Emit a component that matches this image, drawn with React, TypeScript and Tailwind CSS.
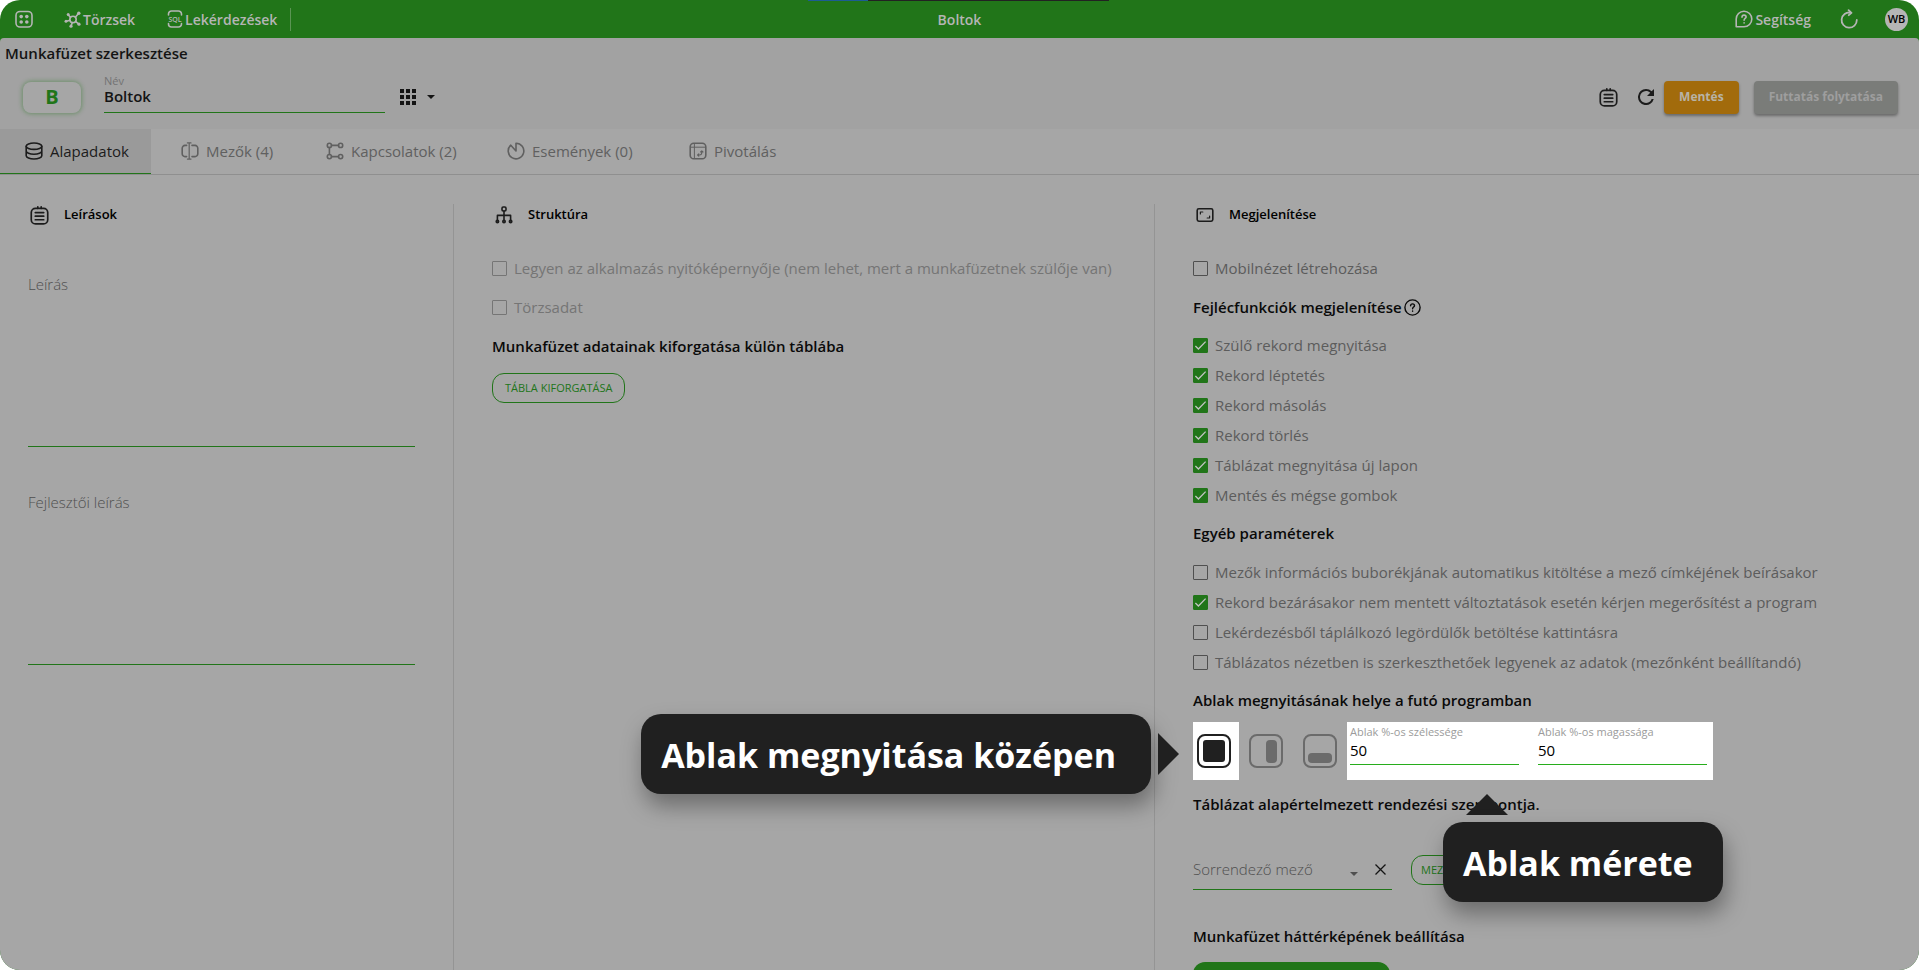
import type { ReactNode } from "react";

const headerFunctions = [
  "Szülő rekord megnyitása",
  "Rekord léptetés",
  "Rekord másolás",
  "Rekord törlés",
  "Táblázat megnyitása új lapon",
  "Mentés és mégse gombok",
];

const otherParams = [
  { label: "Mezők információs buborékjának automatikus kitöltése a mező címkéjének beírásakor", checked: false },
  { label: "Rekord bezárásakor nem mentett változtatások esetén kérjen megerősítést a program", checked: true },
  { label: "Lekérdezésből táplálkozó legördülők betöltése kattintásra", checked: false },
  { label: "Táblázatos nézetben is szerkeszthetőek legyenek az adatok (mezőnként beállítandó)", checked: false },
];

const Svg = ({ size = 18, className = "", children }: { size?: number; className?: string; children: ReactNode }) => (
  <svg
    width={size}
    height={size}
    viewBox="0 0 18 18"
    fill="none"
    stroke="currentColor"
    strokeWidth="1.6"
    strokeLinecap="round"
    strokeLinejoin="round"
    className={`shrink-0 ${className}`}
    aria-hidden="true"
  >
    {children}
  </svg>
);

const AppsIcon = () => (
  <Svg>
    <rect x="1" y="1.5" width="16" height="15.5" rx="4" />
    <g fill="currentColor" stroke="none">
      <circle cx="6.2" cy="6.6" r="1.8" />
      <circle cx="11.8" cy="6.6" r="1.8" />
      <circle cx="6.2" cy="12" r="1.8" />
      <circle cx="11.8" cy="12" r="1.8" />
    </g>
  </Svg>
);

const HubIcon = () => (
  <Svg>
    <circle cx="9" cy="9.5" r="3.2" />
    <path d="M11.3 7.2 14.3 3.8M6.6 7.4 4.6 5.2M6 10.3 2.4 11.2M8.3 12.6 7.2 15.8M11.6 11.4l2.6 2.2" />
    <g fill="currentColor" stroke="none">
      <circle cx="14.8" cy="3.2" r="1.7" />
      <circle cx="4.2" cy="4.4" r="1.5" />
      <circle cx="2" cy="11.2" r="1.5" />
      <circle cx="7" cy="16.2" r="1.6" />
      <circle cx="15" cy="14.2" r="1.6" />
    </g>
  </Svg>
);

const SqlIcon = () => (
  <Svg>
    <path d="M2.5 5V4a3 3 0 0 1 3-3h7a3 3 0 0 1 3 3v1M2.5 13.5v.5a3 3 0 0 0 3 3h7a3 3 0 0 0 3-3v-.5" />
    <text x="9" y="11.8" textAnchor="middle" fontSize="7" fontFamily="Open Sans, sans-serif" fontWeight="600" fill="currentColor" stroke="none">
      SQL
    </text>
  </Svg>
);

const HelpBubbleIcon = () => (
  <Svg>
    <path d="M1.2 16.8V9a7.8 7.8 0 1 1 7.8 7.8z" />
    <path d="M7 7.2c0-1.3.9-2.1 2-2.1s2.1.8 2.1 1.9c0 1.4-2 1.6-2 3.2M9.1 12.7v.2" />
  </Svg>
);

const ReloadIcon = () => (
  <svg width="20" height="20" viewBox="0 0 20 20" fill="none" stroke="currentColor" strokeWidth="1.8" strokeLinecap="round" strokeLinejoin="round" aria-hidden="true">
    <path d="M11.5 3.6A7.6 7.6 0 1 0 17.8 11" />
    <path d="m9.6 1.2 2.9 2.6-2.7 2.4" />
  </svg>
);

const NoteIcon = ({ size = 19 }: { size?: number }) => (
  <Svg size={size}>
    <rect x="1.2" y="2.2" width="15.6" height="14.8" rx="4" />
    <path d="M7.4.8v1.4M10.6.8v1.4M5 6.2h8M5 9.6h8M5 13h8" />
  </Svg>
);

const DatabaseIcon = () => (
  <Svg>
    <ellipse cx="9" cy="4.2" rx="7.8" ry="3.2" />
    <path d="M1.2 4.2v9.6c0 1.8 3.5 3.2 7.8 3.2s7.8-1.4 7.8-3.2V4.2M1.2 9c0 1.8 3.5 3.2 7.8 3.2s7.8-1.4 7.8-3.2" />
  </Svg>
);

const FieldsIcon = () => (
  <Svg>
    <path d="M5.6 3.4H4A2.8 2.8 0 0 0 1.2 6.2v5.6A2.8 2.8 0 0 0 4 14.6h1.6M11 3.4h3a2.8 2.8 0 0 1 2.8 2.8v5.6a2.8 2.8 0 0 1-2.8 2.8h-3" />
    <path strokeWidth="1.2" d="M8.2 1.2v15.6M6.4.9h3.6M6.4 17.1h3.6" />
  </Svg>
);

const LinksIcon = () => (
  <Svg>
    <circle cx="3.4" cy="3.4" r="2.1" />
    <circle cx="14.6" cy="3.4" r="2.1" />
    <circle cx="3.4" cy="14.6" r="2.1" />
    <circle cx="14.6" cy="14.6" r="2.1" />
    <path d="M5.5 3.4h7M5.5 14.6h7M3.4 5.5v7" />
  </Svg>
);

const EventsIcon = () => (
  <Svg>
    <path d="M9 9V1.2A7.8 7.8 0 1 1 3.8 3.2z" />
  </Svg>
);

const PivotIcon = () => (
  <Svg>
    <rect x="1.2" y="1.2" width="15.6" height="15.6" rx="3.6" />
    <path strokeWidth="1" d="M1.4 5.2h15.2M5.4 1.4v15.2" />
    <path strokeWidth="1.1" d="M8.6 13h1.8a2.4 2.4 0 0 0 2.4-2.4V9M9.8 11.8 8.6 13l1.2 1.2M11.6 10l1.2-1.2L14 10" />
  </Svg>
);

const TreeIcon = () => (
  <Svg>
    <rect x="7" y="1" width="4" height="4" rx="1.2" />
    <path d="M9 5v10M2.4 15V9.4h13.2V15" />
    <circle cx="2.4" cy="15.6" r="1.2" />
    <circle cx="9" cy="15.6" r="1.2" />
    <circle cx="15.6" cy="15.6" r="1.2" />
  </Svg>
);

const ScreenIcon = () => (
  <Svg>
    <rect x="1.2" y="2.8" width="15.6" height="12.4" rx="1.6" />
    <path strokeWidth="1.2" d="M4.4 8V6h2.4M13.6 10v2h-2.4" />
  </Svg>
);

const Caret = ({ className = "" }: { className?: string }) => (
  <svg width="8" height="4" viewBox="0 0 8 4" className={className} aria-hidden="true">
    <path d="M0 0h8L4 4z" fill="currentColor" />
  </svg>
);

const Check = ({ label, checked = false, disabled = false }: { label: string; checked?: boolean; disabled?: boolean }) => (
  <label className={`flex h-[30px] items-center gap-[7px] ${disabled ? "text-[#757575]" : "text-[#5c5c5c]"}`}>
    <span className="grid shrink-0 place-items-center">
      <input
        type="checkbox"
        defaultChecked={checked}
        disabled={disabled}
        className="peer col-start-1 row-start-1 size-[15px] appearance-none rounded-[1px] border border-[#4f4f4f] checked:border-[#217519] checked:bg-[#217519] disabled:border-[#757575]"
      />
      <svg
        width="15"
        height="15"
        viewBox="0 0 15 15"
        fill="none"
        stroke="#c4c4c4"
        strokeWidth="1.3"
        className="pointer-events-none invisible col-start-1 row-start-1 peer-checked:visible"
        aria-hidden="true"
      >
        <path d="m2.4 8 3 3 7.2-7.4" />
      </svg>
    </span>
    <span className="whitespace-nowrap">{label}</span>
  </label>
);

const ColumnTitle = ({ icon, children }: { icon: ReactNode; children: ReactNode }) => (
  <div className="flex h-[22px] items-center gap-[13px] text-black">
    <span className="flex w-[23px] justify-center text-[#1c1c1c]">{icon}</span>
    <h2 className="text-[13px] font-semibold">{children}</h2>
  </div>
);

const Heading = ({ className = "", children }: { className?: string; children: ReactNode }) => (
  <h3 className={`flex h-6 items-center font-semibold whitespace-nowrap text-[#0a0a0a] ${className}`}>{children}</h3>
);

const Tab = ({ icon, label, className, active = false }: { icon: ReactNode; label: string; className: string; active?: boolean }) => (
  <button
    type="button"
    role="tab"
    aria-selected={active}
    className={`flex items-center gap-[7px] border-b pl-[25px] whitespace-nowrap ${
      active ? "border-[#217519] bg-[#9a9a9a] text-[#1c1c1c]" : "border-transparent text-[#606060]"
    } ${className}`}
  >
    {icon}
    {label}
  </button>
);

const NoteField = ({ id, label, className }: { id: string; label: string; className: string }) => (
  <div className={className}>
    <label htmlFor={id} className="block h-6 font-light leading-6 text-[#4f4f4f]">
      {label}
    </label>
    <textarea id={id} className="block h-[151px] w-full resize-none border-b border-[#217519] outline-none" />
  </div>
);

const SizeField = ({ id, label }: { id: string; label: string }) => (
  <div className="w-[169px]">
    <label htmlFor={id} className="block text-[11px] leading-4 text-[#9b9b9b]">
      {label}
    </label>
    <input id={id} defaultValue="50" className="block h-[25px] w-full border-b border-[#27ad1c] pb-1 text-black outline-none" />
  </div>
);

const Callout = ({ className, children }: { className: string; children: ReactNode }) => (
  <div
    className={`absolute flex h-20 items-center rounded-[20px] bg-[#202020] pt-[2px] pl-5 text-[34px] font-bold whitespace-nowrap text-white shadow-[3px_12px_22px_rgba(0,0,0,0.35)] ${className}`}
  >
    {children}
  </div>
);

const TopBar = () => (
  <header className="relative grid h-[38px] shrink-0 grid-cols-[1fr_auto_1fr] items-center text-[14px] font-semibold text-[#b5b5b5]">
    <div className="absolute top-0 left-[42.1%] flex h-px w-[301px]">
      <span className="w-[60px] bg-[#1d5c94]" />
      <span className="flex-1 bg-[#222]" />
    </div>
    <nav className="flex items-center pl-[15px]">
      <button type="button" aria-label="Alkalmazások" className="mr-[31px]">
        <AppsIcon />
      </button>
      <a href="#torzsek" className="mr-[31px] flex items-center gap-px">
        <HubIcon />
        Törzsek
      </a>
      <a href="#lekerdezesek" className="flex items-center gap-px">
        <SqlIcon />
        Lekérdezések
      </a>
      <span className="ml-[13px] h-[23px] w-px bg-[#5a9553]" />
    </nav>
    <h1>Boltok</h1>
    <div className="flex items-center justify-end pr-[11px]">
      <a href="#segitseg" className="mr-7 flex items-center gap-[2px]">
        <HelpBubbleIcon />
        Segítség
      </a>
      <button type="button" aria-label="Újratöltés" className="mr-[26px]">
        <ReloadIcon />
      </button>
      <button type="button" className="size-[23px] rounded-full bg-[#b5b5b5] text-[11px] text-black">
        WB
      </button>
    </div>
  </header>
);

const TitleBar = () => (
  <div className="h-[91px] shrink-0 rounded-t-[4px] bg-[#a2a2a2] pt-[5px]">
    <h2 className="pl-[5px] leading-5 font-semibold text-[#141414]">Munkafüzet szerkesztése</h2>
    <div className="mt-[10px] flex h-12 items-center pr-[21px] pl-[23px]">
      <div className="flex h-[31px] w-[58px] items-center justify-center rounded-[8px] bg-[#a6a6a6] text-[20px] font-bold text-[#217519] shadow-[0_0_4px_1px_rgba(33,117,25,0.4)]">
        B
      </div>
      <div className="ml-[23px] w-[281px] pb-[9px]">
        <label htmlFor="name" className="block text-[11px] leading-4 text-[#737373]">
          Név
        </label>
        <input id="name" defaultValue="Boltok" className="block h-6 w-full border-b border-[#217519] pb-2 font-semibold text-[#141414] outline-none" />
      </div>
      <button type="button" aria-label="Ikon választása" className="ml-[15px] flex items-center gap-[11px] text-[#141414]">
        <svg width="16" height="16" viewBox="0 0 16 16" fill="currentColor" aria-hidden="true">
          {[0, 6, 12].map((y) => [0, 6, 12].map((x) => <rect key={`${x}-${y}`} x={x} y={y} width="4" height="4" />))}
        </svg>
        <Caret />
      </button>
      <div className="ml-auto flex items-center text-[#1c1c1c]">
        <button type="button" aria-label="Napló" className="mr-5">
          <NoteIcon />
        </button>
        <button type="button" aria-label="Frissítés" className="mr-[10px]">
          <svg width="16" height="16" viewBox="0 0 16 16" fill="currentColor" aria-hidden="true">
            <path d="M13.65 2.35A7.96 7.96 0 0 0 8 0a8 8 0 1 0 7.74 10h-2.08A6 6 0 1 1 8 2c1.66 0 3.14.69 4.22 1.78L9 7h7V0z" />
          </svg>
        </button>
        <button type="button" className="h-[33px] rounded-[4px] bg-[#a26b0c] px-[15px] text-[12px] font-bold text-[#b8b3a6] shadow-[0_2px_3px_rgba(0,0,0,0.35)]">
          Mentés
        </button>
        <button
          type="button"
          disabled
          className="ml-[15px] h-[33px] rounded-[4px] bg-[#7a7c79] px-[15px] text-[12px] font-bold text-[#9e9e9e] shadow-[0_2px_3px_rgba(0,0,0,0.35)]"
        >
          Futtatás folytatása
        </button>
      </div>
    </div>
  </div>
);

const outlineButton = "h-[30px] rounded-[12px] border border-[#217519] text-[11px] whitespace-nowrap text-[#217519]";

const WindowPlacement = () => (
  <div className="mt-[10px] flex h-[58px]">
    <div className="relative flex w-[46px] bg-white pl-1">
      <button type="button" aria-label="Középen" className="text-[#202020]">
        <svg width="34" height="34" viewBox="0 0 34 34" fill="none" aria-hidden="true">
          <rect x="1" y="1" width="32" height="32" rx="7" stroke="currentColor" strokeWidth="2" />
          <rect x="6" y="6" width="22" height="22" rx="3" fill="currentColor" />
        </svg>
      </button>
      <Callout className="right-[88px] bottom-[-14px] pr-[35px]">Ablak megnyitása középen</Callout>
      <svg width="21" height="42" viewBox="0 0 21 42" className="absolute top-[11px] right-[60px]" aria-hidden="true">
        <path d="M0 0v42l21-21z" fill="#202020" />
      </svg>
    </div>
    <button type="button" aria-label="Jobb oldalon" className="flex w-[54px] items-center justify-center text-[#6b6b6b]">
      <svg width="34" height="34" viewBox="0 0 34 34" fill="none" aria-hidden="true">
        <rect x="1" y="1" width="32" height="32" rx="7" stroke="currentColor" strokeWidth="2" />
        <rect x="17" y="6" width="11" height="23" rx="4" fill="currentColor" />
      </svg>
    </button>
    <button type="button" aria-label="Alul" className="flex w-[54px] items-center justify-center text-[#6b6b6b]">
      <svg width="34" height="34" viewBox="0 0 34 34" fill="none" aria-hidden="true">
        <rect x="1" y="1" width="32" height="32" rx="7" stroke="currentColor" strokeWidth="2" />
        <rect x="5" y="19" width="24" height="10" rx="4" fill="currentColor" />
      </svg>
    </button>
    <div className="relative flex gap-[19px] bg-white pt-[2px] pr-[6px] pl-[3px]">
      <SizeField id="win-width" label="Ablak %-os szélessége" />
      <SizeField id="win-height" label="Ablak %-os magassága" />
      <svg width="42" height="21" viewBox="0 0 42 21" className="absolute top-[72px] left-[119px] z-10" aria-hidden="true">
        <path d="M21 0 42 21H0z" fill="#202020" />
      </svg>
      <Callout className="top-[100px] left-24 z-10 pr-[30px]">Ablak mérete</Callout>
    </div>
  </div>
);

export default function App() {
  return (
    <div className="flex h-screen flex-col overflow-hidden rounded-[20px] bg-[#217519] font-['Open_Sans',sans-serif] text-[15px]">
      <TopBar />
      <TitleBar />
      <div role="tablist" className="flex h-[46px] shrink-0 border-b border-[#8f8f8f] bg-[#a6a6a6]">
        <Tab icon={<DatabaseIcon />} label="Alapadatok" active className="w-[151px]" />
        <Tab icon={<FieldsIcon />} label="Mezők (4)" className="ml-[5px] w-[145px]" />
        <Tab icon={<LinksIcon />} label="Kapcsolatok (2)" className="w-[181px]" />
        <Tab icon={<EventsIcon />} label="Események (0)" className="w-[182px]" />
        <Tab icon={<PivotIcon />} label="Pivotálás" className="w-[145px]" />
      </div>
      <main className="grid min-h-0 flex-1 grid-cols-[454fr_701fr_764fr] bg-[#a6a6a6] pt-[29px]">
        <section className="border-r border-[#949494] pr-[38px] pl-7">
          <ColumnTitle icon={<NoteIcon />}>Leírások</ColumnTitle>
          <NoteField id="description" label="Leírás" className="mt-[46px]" />
          <NoteField id="dev-description" label="Fejlesztői leírás" className="mt-[43px]" />
        </section>

        <section className="border-r border-[#949494] pl-[38px]">
          <ColumnTitle icon={<TreeIcon />}>Struktúra</ColumnTitle>
          <div className="mt-[27px] flex flex-col gap-[9px]">
            <Check label="Legyen az alkalmazás nyitóképernyője (nem lehet, mert a munkafüzetnek szülője van)" disabled />
            <Check label="Törzsadat" disabled />
          </div>
          <Heading className="mt-3">Munkafüzet adatainak kiforgatása külön táblába</Heading>
          <button type="button" className={`mt-[15px] px-3 ${outlineButton}`}>
            TÁBLA KIFORGATÁSA
          </button>
        </section>

        <section className="min-w-0 pl-[38px]">
          <ColumnTitle icon={<ScreenIcon />}>Megjelenítése</ColumnTitle>
          <div className="mt-[27px]">
            <Check label="Mobilnézet létrehozása" />
          </div>
          <Heading className="mt-3">
            Fejlécfunkciók megjelenítése
            <svg width="17" height="17" viewBox="0 0 17 17" fill="none" stroke="currentColor" strokeWidth="1.4" strokeLinecap="round" className="ml-[2px]" aria-hidden="true">
              <circle cx="8.5" cy="8.5" r="7.6" />
              <path d="M6.6 6.8c0-1.1.8-1.9 1.9-1.9s2 .7 2 1.8c0 1.3-1.9 1.5-1.9 3M8.6 12v.2" />
            </svg>
          </Heading>
          <div className="mt-[11px]">
            {headerFunctions.map((label) => (
              <Check key={label} label={label} checked />
            ))}
          </div>
          <Heading className="mt-[11px]">Egyéb paraméterek</Heading>
          <div className="mt-3">
            {otherParams.map((item) => (
              <Check key={item.label} label={item.label} checked={item.checked} />
            ))}
          </div>
          <Heading className="mt-[11px]">Ablak megnyitásának helye a futó programban</Heading>
          <WindowPlacement />
          <Heading className="mt-3">Táblázat alapértelmezett rendezési szempontja.</Heading>
          <div className="mt-[34px] flex h-10 items-center">
            <div className="flex h-10 w-[199px] items-center border-b border-[#217519] pr-[6px] text-[#141414]">
              <select aria-label="Sorrendező mező" className="h-full flex-1 appearance-none font-light text-[#4f4f4f] outline-none">
                <option>Sorrendező mező</option>
              </select>
              <Caret className="mt-2 text-[#4f4f4f]" />
              <button type="button" aria-label="Törlés" className="ml-[17px]">
                <svg width="11" height="11" viewBox="0 0 11 11" stroke="currentColor" strokeWidth="1.3" aria-hidden="true">
                  <path d="m.5.5 10 10M10.5.5l-10 10" />
                </svg>
              </button>
            </div>
            <button type="button" className={`ml-[19px] px-[9px] ${outlineButton}`}>
              MEZŐK
            </button>
          </div>
          <Heading className="mt-[34px]">Munkafüzet háttérképének beállítása</Heading>
          <button type="button" aria-label="Háttérkép feltöltése" className="mt-[14px] h-10 w-[197px] rounded-[12px] bg-[#217519]" />
        </section>
      </main>
    </div>
  );
}
